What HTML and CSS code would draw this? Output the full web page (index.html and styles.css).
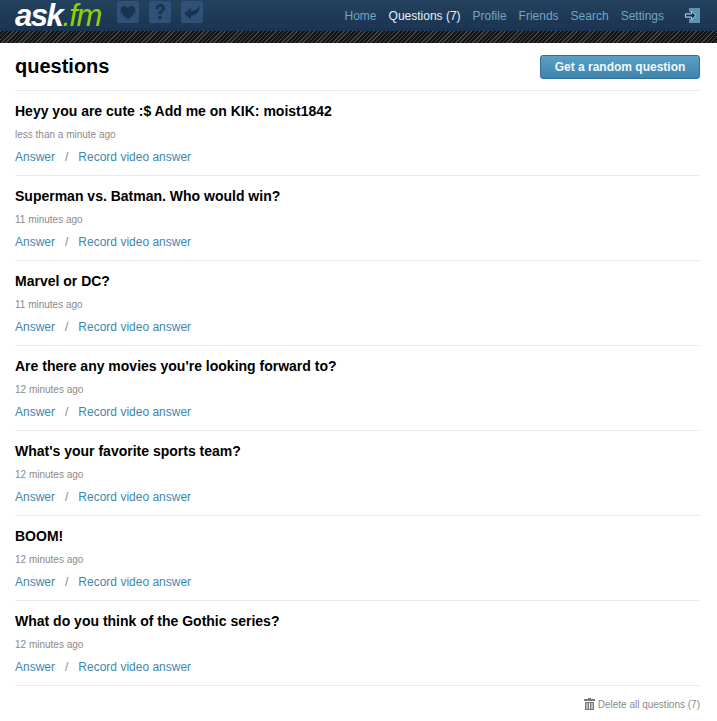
FILE: index.html
```html
<!DOCTYPE html>
<html lang="en">
<head>
    <meta charset="UTF-8">
    <title>ask.fm - questions</title>
    <link rel="stylesheet" href="styles.css">
</head>
<body>

<header class="topbar">
    <a class="logo" href="#">ask<span class="logo-fm">.fm</span></a>
    <div class="tiles">
        <a class="tile" href="#">
            <svg viewBox="0 0 22 22" width="22" height="22"><path d="M11 18.5 C6 14.5 3.5 12 3.5 8.8 C3.5 6.4 5.3 5 7.2 5 C8.8 5 10.2 5.8 11 7.3 C11.8 5.8 13.2 5 14.8 5 C16.7 5 18.5 6.4 18.5 8.8 C18.5 12 16 14.5 11 18.5 Z" fill="#1b334f"/></svg>
        </a>
        <a class="tile" href="#">
            <svg viewBox="0 0 22 22" width="22" height="22"><path d="M6.5 8 C6.5 4.8 8.6 3 11.3 3 C14 3 16 4.7 16 7.1 C16 9 14.9 10 13.6 10.9 C12.6 11.6 12.5 12.1 12.5 13.4 L9.4 13.4 C9.4 11.3 9.8 10.4 11.2 9.4 C12.2 8.7 12.8 8.2 12.8 7.3 C12.8 6.3 12.2 5.7 11.2 5.7 C10.1 5.7 9.5 6.6 9.5 8 Z M9.3 15 L12.6 15 L12.6 18.3 L9.3 18.3 Z" fill="#1b334f"/></svg>
        </a>
        <a class="tile" href="#">
            <svg viewBox="0 0 22 22" width="22" height="22"><path d="M19 4 C18.6 9.5 16.5 14.5 10 14.5 L10 18.5 L3 12.5 L10 6.5 L10 10 C14 10 16.5 8 19 4 Z" fill="#1b334f"/></svg>
        </a>
    </div>
    <nav class="nav">
        <a href="#">Home</a>
        <a class="active" href="#">Questions (7)</a>
        <a href="#">Profile</a>
        <a href="#">Friends</a>
        <a href="#">Search</a>
        <a href="#">Settings</a>
        <a class="logout" href="#">
            <svg viewBox="0 0 16 16" width="16" height="16"><path d="M5 0 H16 V15 H5 V11 H7 V9.5 H1 V5.5 H7 V4 H5 Z" fill="#5b93b5"/><path d="M1.5 6 H7.5 V3.2 L12 7.5 L7.5 11.8 V9 H1.5 Z" fill="#1a3350" stroke="#b9d2e2" stroke-width="1"/></svg>
        </a>
    </nav>
</header>
<div class="hatch"></div>

<div class="content">
    <div class="page-head">
        <h1>questions</h1>
        <a class="random-btn" href="#">Get a random question</a>
    </div>

    <div class="question">
        <h3>Heyy you are cute :$ Add me on KIK: moist1842</h3>
        <p class="time">less than a minute ago</p>
        <p class="actions"><a href="#">Answer</a><span class="sep">/</span><a href="#">Record video answer</a></p>
    </div>
    <div class="question">
        <h3>Superman vs. Batman. Who would win?</h3>
        <p class="time">11 minutes ago</p>
        <p class="actions"><a href="#">Answer</a><span class="sep">/</span><a href="#">Record video answer</a></p>
    </div>
    <div class="question">
        <h3>Marvel or DC?</h3>
        <p class="time">11 minutes ago</p>
        <p class="actions"><a href="#">Answer</a><span class="sep">/</span><a href="#">Record video answer</a></p>
    </div>
    <div class="question">
        <h3>Are there any movies you're looking forward to?</h3>
        <p class="time">12 minutes ago</p>
        <p class="actions"><a href="#">Answer</a><span class="sep">/</span><a href="#">Record video answer</a></p>
    </div>
    <div class="question">
        <h3>What's your favorite sports team?</h3>
        <p class="time">12 minutes ago</p>
        <p class="actions"><a href="#">Answer</a><span class="sep">/</span><a href="#">Record video answer</a></p>
    </div>
    <div class="question">
        <h3>BOOM!</h3>
        <p class="time">12 minutes ago</p>
        <p class="actions"><a href="#">Answer</a><span class="sep">/</span><a href="#">Record video answer</a></p>
    </div>
    <div class="question">
        <h3>What do you think of the Gothic series?</h3>
        <p class="time">12 minutes ago</p>
        <p class="actions"><a href="#">Answer</a><span class="sep">/</span><a href="#">Record video answer</a></p>
    </div>

    <div class="page-foot">
        <a class="delete-all" href="#">
            <svg viewBox="0 0 11 12" width="11" height="12"><path d="M4 0 H7 V1 H11 V3 H0 V1 H4 Z M1 4 H10 V12 H1 Z" fill="#777"/><path d="M3 5 V11 M5.5 5 V11 M8 5 V11" stroke="#fff" stroke-width="1"/></svg>
            Delete all questions (7)
        </a>
    </div>
</div>

</body>
</html>
```

FILE: styles.css
```css
/* General */
body {
    margin: 0;
    font-family: "Liberation Sans", Arial, sans-serif;
    background: #fff;
    color: #000;
}

a {
    text-decoration: none;
}

/* Top bar */
.topbar {
    height: 31px;
    background: linear-gradient(#24425f, #1a3350);
    display: flex;
    align-items: center;
    padding: 0 17px 0 15px;
    overflow: hidden;
}

.logo {
    font-size: 31px;
    font-weight: bold;
    font-style: italic;
    color: #fff;
    letter-spacing: -1.5px;
    width: 102px;
    line-height: 31px;
}

.logo-fm {
    color: #8fd400;
    font-weight: normal;
}

.tiles {
    display: flex;
    gap: 10px;
    margin-bottom: 8px;
}

.tile {
    width: 22px;
    height: 22px;
    background: #2f5178;
    border-radius: 2px;
    display: block;
}

.tile svg {
    display: block;
}

.nav {
    margin-left: auto;
    display: flex;
    align-items: center;
    gap: 12px;
    font-size: 12px;
}

.nav a {
    color: #6ea6c6;
}

.nav a.active {
    color: #e8f0f5;
}

.nav .logout {
    display: block;
    height: 16px;
    margin-left: 8px;
}

.hatch {
    height: 12px;
    background-color: #1a1a1a;
    background-image: repeating-linear-gradient(135deg, #444 0, #444 1px, #151515 1px, #151515 3px);
}

/* Content */
.content {
    padding: 0 17px 0 15px;
}

.page-head {
    height: 47px;
    border-bottom: 1px solid #eaeaea;
    display: flex;
    align-items: center;
    justify-content: space-between;
}

.page-head h1 {
    margin: 0;
    font-size: 20px;
    font-weight: bold;
}

.random-btn {
    width: 158px;
    height: 22px;
    line-height: 22px;
    text-align: center;
    font-size: 12px;
    font-weight: bold;
    color: #f2f7fa;
    background: linear-gradient(#5a9fc6, #3f84ae);
    border: 1px solid #2f6f96;
    border-radius: 3px;
}

/* Questions */
.question {
    height: 84px;
    border-bottom: 1px solid #eaeaea;
    display: flow-root;
}

.question h3 {
    margin: 12px 0 0;
    font-size: 14px;
    line-height: 17px;
    font-weight: bold;
}

.time {
    margin: 8px 0 0;
    font-size: 10px;
    line-height: 14px;
    color: #8a8a8a;
}

.actions {
    margin: 7px 0 0;
    font-size: 12px;
    line-height: 16px;
}

.actions a {
    color: #3f87ad;
}

.sep {
    color: #888;
    margin: 0 10px;
}

/* Footer */
.page-foot {
    display: flex;
    justify-content: flex-end;
    padding-top: 12px;
}

.delete-all {
    font-size: 10px;
    color: #8a8a8a;
    display: flex;
    align-items: center;
    gap: 3px;
}
```
